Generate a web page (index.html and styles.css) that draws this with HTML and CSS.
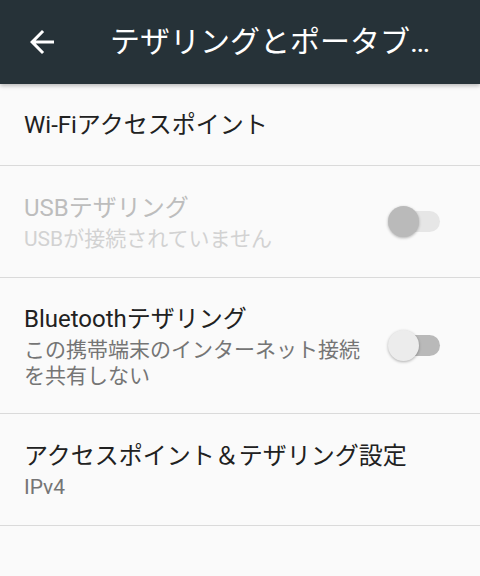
FILE: index.html
```html
<!DOCTYPE html>
<html lang="ja">
<head>
    <meta charset="UTF-8">
    <meta name="viewport" content="width=device-width, initial-scale=1.0">
    <title>テザリングとポータブルアクセスポイント</title>
    <link rel="stylesheet" href="styles.css">
</head>
<body>
    <header class="appbar">
        <button class="back" type="button" aria-label="戻る">
            <svg viewBox="0 0 24 24" width="36" height="36">
                <path d="M20 11H7.83l5.59-5.59L12 4l-8 8 8 8 1.41-1.41L7.83 13H20v-2z" fill="#ffffff"/>
            </svg>
        </button>
        <h1 class="title">テザリングとポータブルアクセスポイント</h1>
    </header>

    <main class="list">
        <div class="pref single">
            <div class="text">
                <div class="pref-title">Wi-Fiアクセスポイント</div>
            </div>
        </div>

        <div class="pref disabled">
            <div class="text">
                <div class="pref-title">USBテザリング</div>
                <div class="summary">USBが接続されていません</div>
            </div>
            <div class="widget">
                <span class="switch"><span class="thumb"></span></span>
            </div>
        </div>

        <div class="pref tall">
            <div class="text">
                <div class="pref-title">Bluetoothテザリング</div>
                <div class="summary">この携帯端末のインターネット接続を共有しない</div>
            </div>
            <div class="widget">
                <span class="switch"><span class="thumb"></span></span>
            </div>
        </div>

        <div class="pref">
            <div class="text">
                <div class="pref-title">アクセスポイント＆テザリング設定</div>
                <div class="summary">IPv4</div>
            </div>
        </div>
    </main>
</body>
</html>
```

FILE: styles.css
```css
body {
    margin: 0;
    background-color: #fafafa;
    font-family: Roboto, "Noto Sans CJK JP", sans-serif;
}
.appbar {
    display: flex;
    align-items: center;
    height: 84px;
    background-color: #263238;
    box-shadow: 0 2px 4px rgba(0, 0, 0, 0.25);
    position: relative;
}
.back {
    width: 36px;
    height: 36px;
    margin-left: 24px;
    padding: 0;
    border: none;
    background: none;
    display: flex;
}
.title {
    margin: 0 0 0 50px;
    width: 340px;
    color: #ffffff;
    font-size: 30px;
    font-weight: 400;
    line-height: 40px;
    white-space: nowrap;
    overflow: hidden;
    text-overflow: ellipsis;
}
.pref {
    display: flex;
    align-items: center;
    height: 111px;
    padding: 0 40px 0 24px;
    border-bottom: 1px solid #dadada;
}
.pref.single {
    height: 81px;
}
.pref.tall {
    height: 135px;
}
.text {
    flex: 1;
    min-width: 0;
}
.pref-title {
    font-size: 24px;
    line-height: 32px;
    color: #212121;
}
.summary {
    font-size: 21px;
    line-height: 26px;
    color: #757575;
    margin-top: 2px;
}
.disabled .pref-title {
    color: #bdbdbd;
}
.disabled .summary {
    color: #d2d2d2;
}
.widget {
    width: 70px;
    display: flex;
    justify-content: flex-end;
}
.switch {
    position: relative;
    width: 51px;
    height: 21px;
    border-radius: 11px;
    background-color: #b9b9b9;
}
.thumb {
    position: absolute;
    left: -1px;
    top: -5px;
    width: 31px;
    height: 31px;
    border-radius: 50%;
    background-color: #ececec;
    box-shadow: 0 1px 3px rgba(0, 0, 0, 0.3);
}
.disabled .switch {
    background-color: #e6e6e6;
}
.disabled .thumb {
    background-color: #bababa;
}
```
